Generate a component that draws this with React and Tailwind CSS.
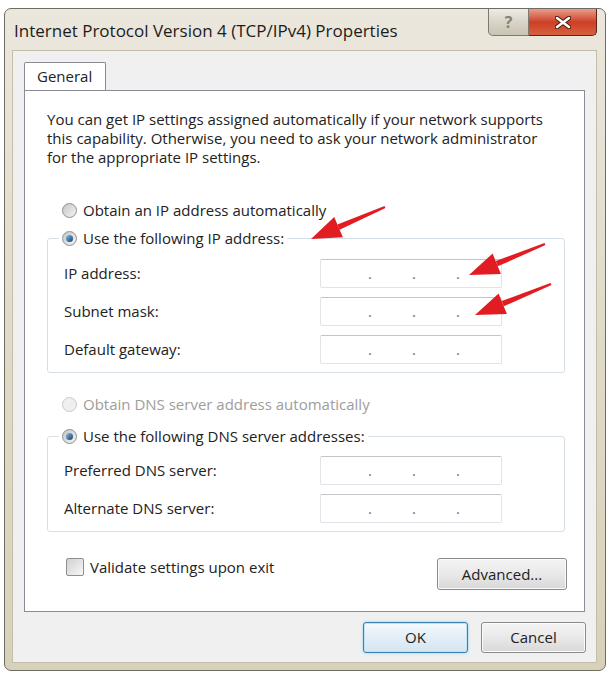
import React from 'react';

const Radio = ({ checked, disabled }) => (
    <span
        className={
            disabled
                ? 'flex h-[15px] w-[15px] shrink-0 items-center justify-center rounded-full border border-[#c9c9c9] bg-[#efefef]'
                : 'flex h-[15px] w-[15px] shrink-0 items-center justify-center rounded-full border border-[#8e8f8f] bg-linear-to-br from-[#c6c6c6] to-[#f4f4f4]'
        }
    >
        {checked && <span className="h-[7px] w-[7px] rounded-full bg-linear-to-br from-[#7fc0ea] to-[#17426d]" />}
    </span>
);

const IpBox = () => (
    <div className="flex h-[29px] w-[182px] items-center gap-[40px] rounded-[2px] border border-[#e0e3e7] border-t-[#c2c5ca] bg-white pl-[47px] text-[#707070]">
        <span>.</span>
        <span>.</span>
        <span>.</span>
    </div>
);

const Row = ({ label }) => (
    <div className="flex items-center">
        <span className="w-[256px]">{label}</span>
        <IpBox />
    </div>
);

const Group = ({ legend, rows, mt, rowsMt }) => (
    <fieldset className={`ml-[22px] w-[518px] rounded-[3px] border border-[#d5dfe5] pb-[8px] pl-[11px] ${mt}`}>
        <legend className="flex h-[20px] items-center gap-[6px] px-[3px]">
            <Radio checked />
            <span>{legend}</span>
        </legend>
        <div className={`ml-[5px] flex flex-col gap-[9px] ${rowsMt}`}>
            {rows.map((r) => (
                <Row key={r} label={r} />
            ))}
        </div>
    </fieldset>
);

const Button = ({ children, primary, className }) => (
    <button
        type="button"
        className={
            primary
                ? `h-[31px] w-[105px] rounded-[3px] border border-[#3c7fb1] bg-linear-to-b from-[#f4f9fc] via-[#e3eef6] to-[#d4e6f2] shadow-[inset_0_0_0_1px_#bfe3f6,0_0_3px_#8fd0f0] ${className}`
                : `h-[31px] w-[105px] rounded-[3px] border border-[#8a8a8a] bg-linear-to-b from-[#f4f4f4] via-[#e9e9e9] to-[#d8d8d8] shadow-[inset_0_0_0_1px_#fbfbfb] ${className}`
        }
    >
        {children}
    </button>
);

// red annotation arrow, head at tip
const Arrow = ({ tail, tip }) => {
    const dx = tip[0] - tail[0];
    const dy = tip[1] - tail[1];
    const len = Math.hypot(dx, dy);
    const ux = dx / len;
    const uy = dy / len;
    const nx = -uy;
    const ny = ux;
    const bx = tip[0] - ux * 30;
    const by = tip[1] - uy * 30;
    const p = (x, y) => `${x.toFixed(1)},${y.toFixed(1)}`;
    const shaft = [
        p(tail[0] + nx * 1.2, tail[1] + ny * 1.2),
        p(bx + nx * 2.8, by + ny * 2.8),
        p(bx - nx * 2.8, by - ny * 2.8),
        p(tail[0] - nx * 1.2, tail[1] - ny * 1.2),
    ].join(' ');
    const head = [p(tip[0], tip[1]), p(bx + nx * 11, by + ny * 11), p(bx - nx * 11, by - ny * 11)].join(' ');
    return (
        <g fill="#e11d23">
            <polygon points={shaft} />
            <polygon points={head} />
        </g>
    );
};

export default function App() {
    return (
        <div className="relative h-[676px] w-[609px] overflow-hidden bg-white pl-[4px] pt-[8px] font-['Open_Sans','Segoe_UI',sans-serif] text-[15px] text-[#222]">
            <div className="flex h-[663px] w-[602px] flex-col rounded-[7px] border border-[#6f6c63] bg-linear-to-b from-[#ebe7dd] via-[#e0dac8] to-[#d8d1ba]">
                {/* title bar */}
                <div className="flex h-[41px] shrink-0 items-start justify-between">
                    <div className="pl-[9px] pt-[11px] text-[17px] leading-[21px] text-[#1c1c1c]">
                        Internet Protocol Version 4 (TCP/IPv4) Properties
                    </div>
                    <div className="mr-[8px] flex">
                        <div className="flex h-[27px] w-[41px] items-center justify-center rounded-bl-[5px] border border-t-0 border-[#7d7a70] bg-linear-to-b from-[#eeebe3] via-[#d8d4c7] to-[#c8c3b3] text-[16px] font-bold text-[#85827a]">
                            ?
                        </div>
                        <div className="flex h-[27px] w-[68px] items-center justify-center rounded-br-[5px] border border-l-0 border-t-0 border-[#5e241a] bg-linear-to-b from-[#e99c8a] via-[#cc3f24] to-[#d85f40]">
                            <svg width="16" height="13" viewBox="0 0 16 13">
                                <path d="M2 2 L14 11 M14 2 L2 11" stroke="#4a1a12" strokeWidth="4.6" strokeLinecap="round" />
                                <path d="M2 2 L14 11 M14 2 L2 11" stroke="#ffffff" strokeWidth="2.6" strokeLinecap="round" />
                            </svg>
                        </div>
                    </div>
                </div>

                {/* client area */}
                <div className="ml-[7px] flex w-[585px] flex-col border border-[#c4bea9] bg-[#f0f0f0] pb-[9px]">
                    <div className="ml-[11px] mt-[11px] -mb-[1px] flex h-[29px] w-[82px] items-center rounded-t-[2px] border border-b-0 border-[#898c95] bg-white pl-[12px] pb-[1px]">
                        General
                    </div>

                    <div className="ml-[11px] flex h-[522px] w-[561px] flex-col border border-[#898c95] bg-white">
                        <p className="pl-[22px] pt-[19px] leading-[19px]">
                            You can get IP settings assigned automatically if your network supports
                            <br />
                            this capability. Otherwise, you need to ask your network administrator
                            <br />
                            for the appropriate IP settings.
                        </p>

                        <div className="ml-[37px] mt-[33px] flex h-[20px] items-center gap-[6px]">
                            <Radio />
                            <span>Obtain an IP address automatically</span>
                        </div>

                        <Group
                            legend="Use the following IP address:"
                            rows={['IP address:', 'Subnet mask:', 'Default gateway:']}
                            mt="mt-[8px]"
                            rowsMt="mt-[11px]"
                        />

                        <div className="ml-[37px] mt-[21px] flex h-[20px] items-center gap-[6px] text-[#9d9d9d]">
                            <Radio disabled />
                            <span>Obtain DNS server address automatically</span>
                        </div>

                        <Group
                            legend="Use the following DNS server addresses:"
                            rows={['Preferred DNS server:', 'Alternate DNS server:']}
                            mt="mt-[12px]"
                            rowsMt="mt-[10px]"
                        />

                        <div className="mt-[26px] flex items-start justify-between pl-[41px] pr-[17px]">
                            <div className="flex h-[18px] items-center gap-[6px]">
                                <span className="h-[18px] w-[18px] rounded-[2px] border border-[#8f8f8f] bg-linear-to-br from-[#d0d0d0] to-[#f8f8f8]" />
                                <span>Validate settings upon exit</span>
                            </div>
                            <Button className="h-[32px] w-[130px]">Advanced...</Button>
                        </div>
                    </div>

                    <div className="mt-[10px] flex justify-end gap-[13px] pr-[10px]">
                        <Button primary>OK</Button>
                        <Button>Cancel</Button>
                    </div>
                </div>
            </div>

            <svg className="pointer-events-none absolute left-0 top-0" width="609" height="676">
                <Arrow tail={[385, 207]} tip={[311, 239]} />
                <Arrow tail={[545, 244]} tip={[469, 275]} />
                <Arrow tail={[551, 284]} tip={[475, 315]} />
            </svg>
        </div>
    );
}
